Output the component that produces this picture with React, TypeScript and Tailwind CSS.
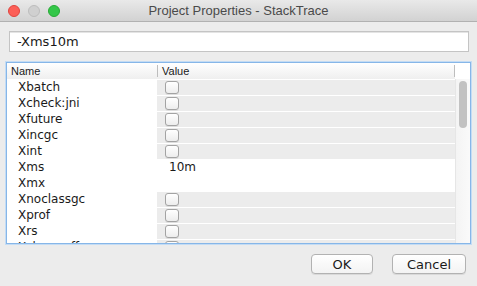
import React from "react";

type Row = { name: string; kind: "cb" | "text"; value?: string };

const rows: Row[] = [
  { name: "Xbatch", kind: "cb" },
  { name: "Xcheck:jni", kind: "cb" },
  { name: "Xfuture", kind: "cb" },
  { name: "Xincgc", kind: "cb" },
  { name: "Xint", kind: "cb" },
  { name: "Xms", kind: "text", value: "10m" },
  { name: "Xmx", kind: "text", value: "" },
  { name: "Xnoclassgc", kind: "cb" },
  { name: "Xprof", kind: "cb" },
  { name: "Xrs", kind: "cb" },
  { name: "Xshare:off", kind: "cb" },
];

function Checkbox() {
  return (
    <div className="w-[14px] h-[13px] rounded-[3px] border border-[#a3a3a3] bg-gradient-to-b from-white to-[#ededed] shadow-[0_1px_0_rgba(0,0,0,0.06)]" />
  );
}

export default function App() {
  return (
    <div
      className="w-[477px] h-[286px] bg-[#ececec] flex flex-col overflow-hidden text-[#1a1a1a]"
      style={{ fontFamily: '"DejaVu Sans", sans-serif' }}
    >
      {/* Title bar */}
      <div className="relative h-[22px] shrink-0 bg-gradient-to-b from-[#e9e9e9] to-[#d2d2d2] border-b border-[#b1b1b1] flex items-center justify-center">
        <div className="absolute left-[8px] top-[5px] flex gap-[8px]">
          <div className="w-[12px] h-[12px] rounded-full bg-[#fc5f57] border border-[#e0443e]" />
          <div className="w-[12px] h-[12px] rounded-full bg-[#d0d0d0] border border-[#bdbdbd]" />
          <div className="w-[12px] h-[12px] rounded-full bg-[#34c749] border border-[#27aa35]" />
        </div>
        <span
          className="text-[13px] text-[#4a4a4a] leading-none"
          style={{ fontFamily: '"Liberation Sans", Arial, sans-serif' }}
        >
          Project Properties - StackTrace
        </span>
      </div>

      {/* Text field */}
      <div className="mt-[9px] ml-[9px] w-[460px] h-[21px] bg-white border border-[#c4c4c4] shadow-[inset_0_1px_0_#e4e4e4] flex items-center pl-[7px] text-[13px] leading-none">
        -Xms10m
      </div>

      {/* Table */}
      <div className="mt-[10px] ml-[6px] w-[465px] h-[182px] border border-[#86b6e8] shadow-[0_0_0_1px_#c4dcf4] flex overflow-hidden bg-white">
        <div className="w-[448px] flex flex-col">
          {/* Header */}
          <div
            className="h-[16px] shrink-0 flex bg-gradient-to-b from-white to-[#efefef] text-[11px] leading-none"
            style={{ fontFamily: '"Liberation Sans", Arial, sans-serif' }}
          >
            <div className="w-[150px] flex items-center pl-[4px]">Name</div>
            <div className="flex-1 flex items-center pl-[4px] border-l border-[#bdbdbd] my-[2px]">Value</div>
            <div className="w-px my-[2px] bg-[#bdbdbd]" />
          </div>
          {rows.map((r) => (
            <div key={r.name} className="h-[16px] shrink-0 flex text-[12px] leading-none">
              <div className="w-[150px] bg-white flex items-center pl-[11px]">{r.name}</div>
              {r.kind === "cb" ? (
                <div className="flex-1 bg-[#ececec] border-t border-white flex items-center pl-[8px]">
                  <Checkbox />
                </div>
              ) : (
                <div className="flex-1 bg-white flex items-center pl-[12px]">{r.value}</div>
              )}
            </div>
          ))}
        </div>
        {/* Scroll column */}
        <div className="flex-1 flex flex-col">
          <div className="h-[16px] shrink-0 bg-white" />
          <div className="flex-1 bg-gradient-to-r from-[#f4f4f4] to-[#fafafa] border-l border-[#e6e6e6] flex justify-center pt-[2px]">
            <div className="w-[8px] h-[47px] rounded-full bg-[#c2c2c2]" />
          </div>
        </div>
      </div>

      {/* Buttons */}
      <div className="mt-[10px] flex justify-end pr-[11px] gap-[19px]">
        <button className="w-[62px] h-[20px] rounded-[4px] border border-[#b2b2b2] bg-gradient-to-b from-white to-[#f3f3f3] shadow-[0_1px_0_rgba(0,0,0,0.08)] text-[13px] leading-none flex items-center justify-center">
          OK
        </button>
        <button className="w-[74px] h-[20px] rounded-[4px] border border-[#b2b2b2] bg-gradient-to-b from-white to-[#f3f3f3] shadow-[0_1px_0_rgba(0,0,0,0.08)] text-[13px] leading-none flex items-center justify-center">
          Cancel
        </button>
      </div>
    </div>
  );
}
